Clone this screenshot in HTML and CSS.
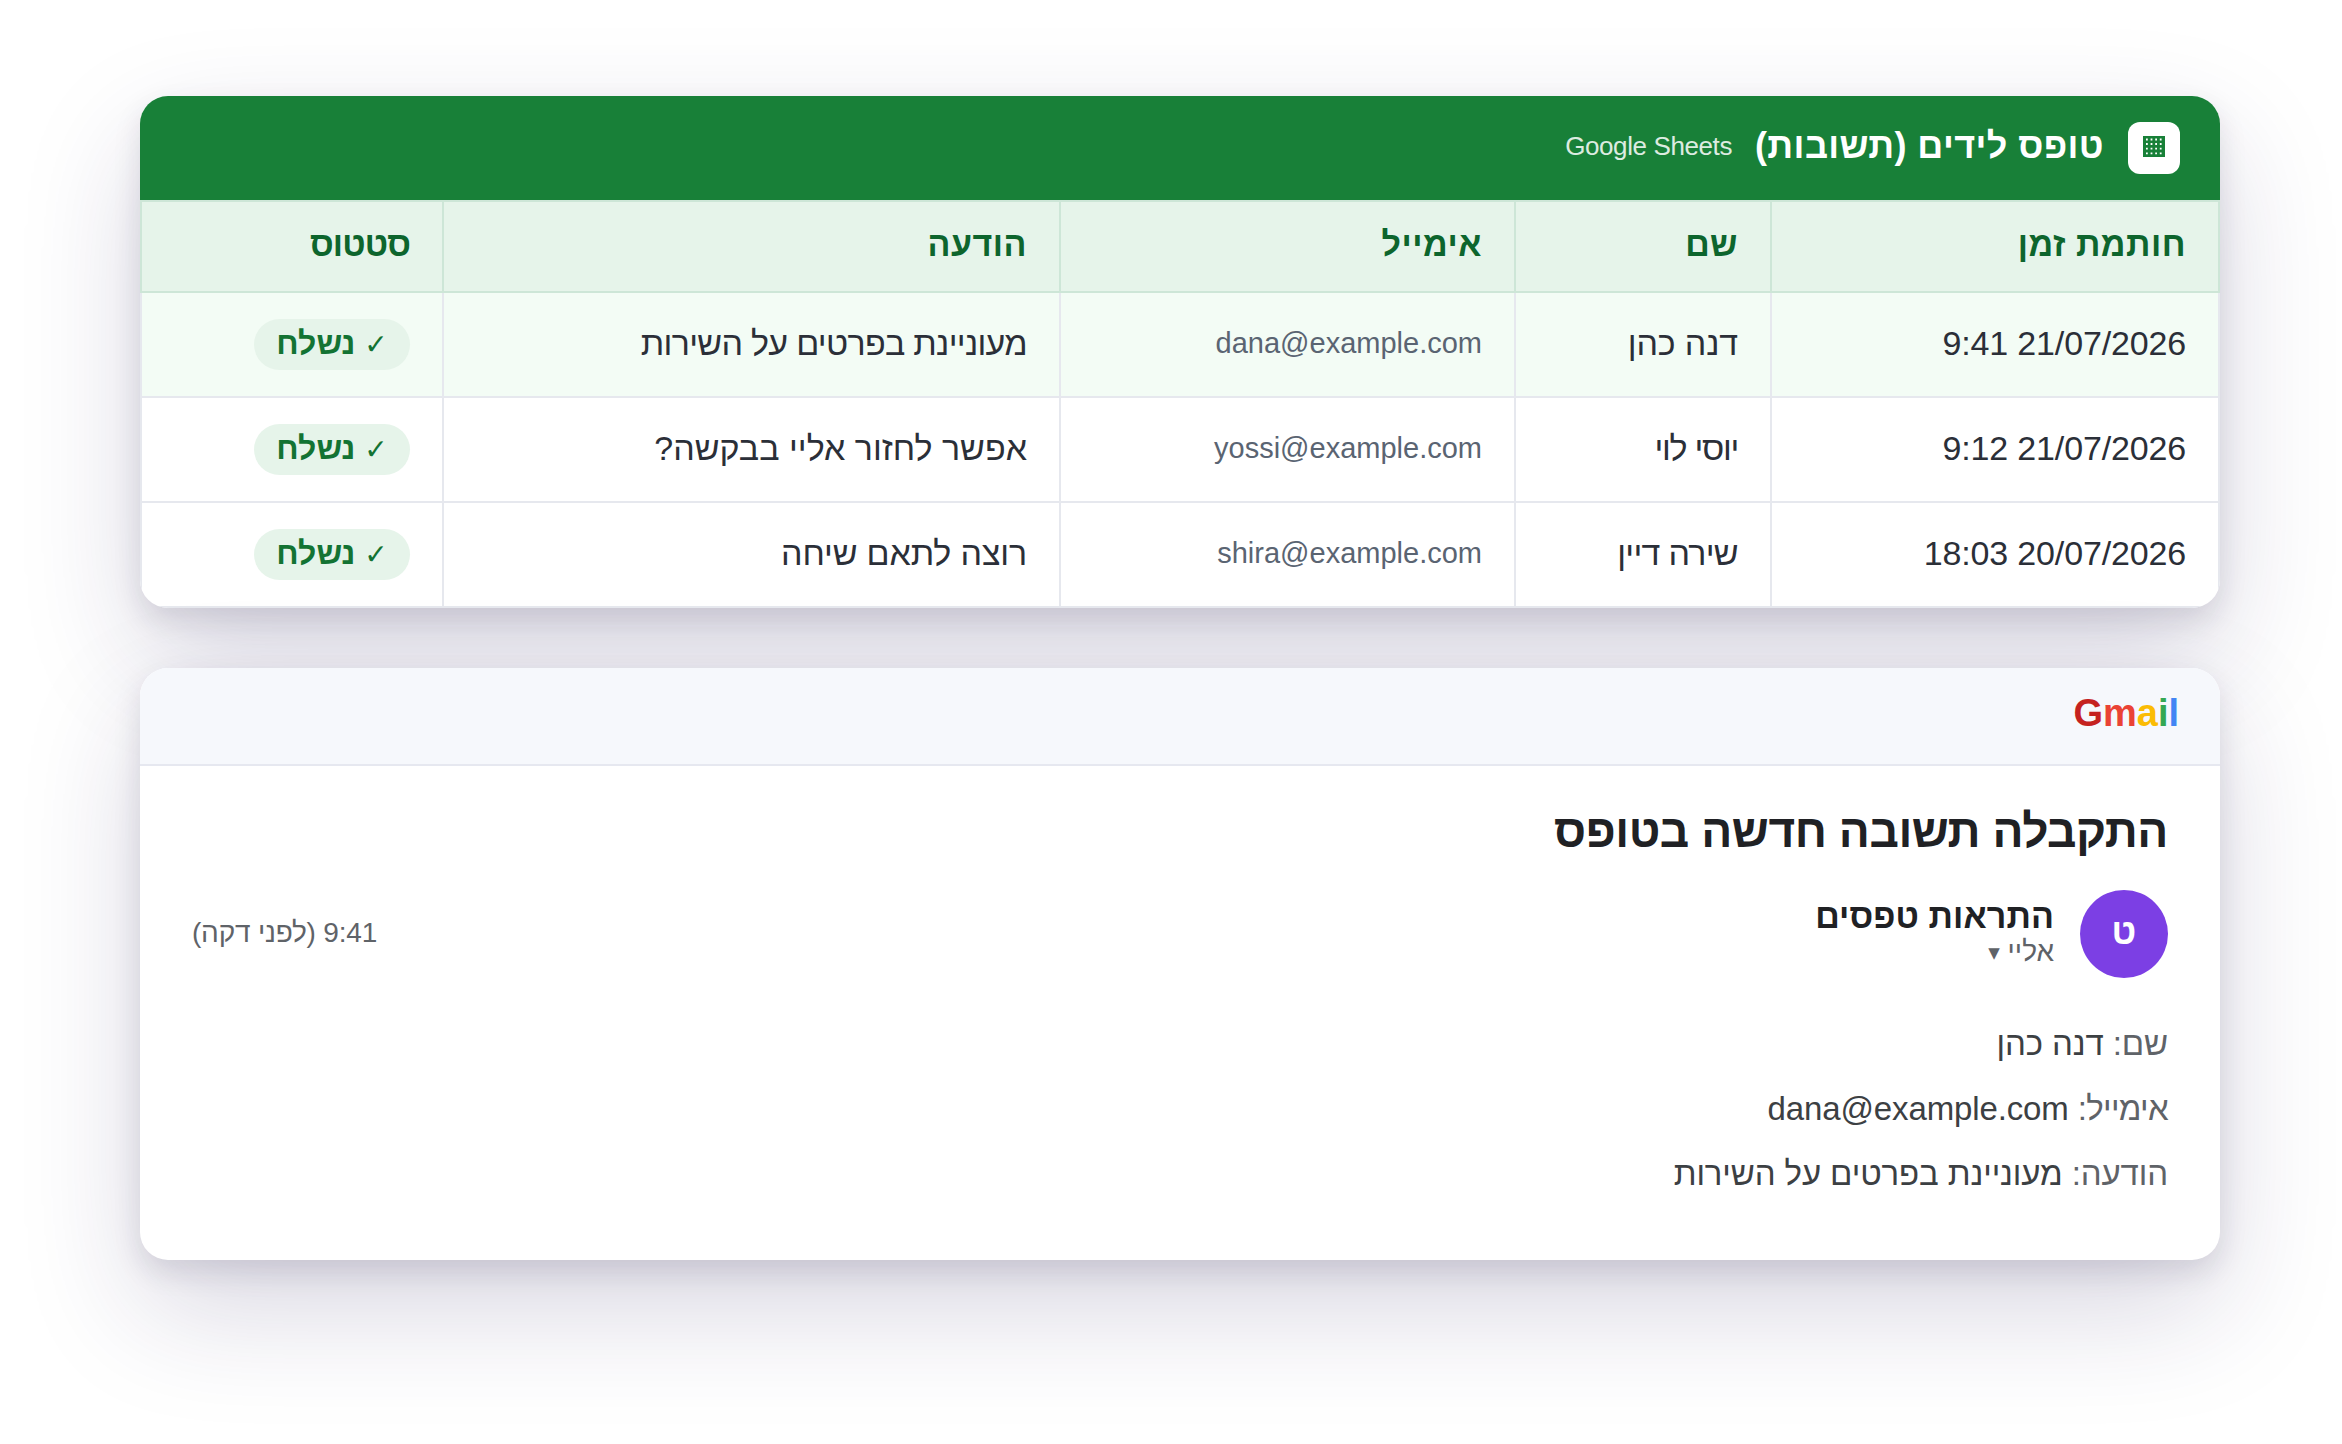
FILE: index.html
```
<!DOCTYPE html>
<html lang="he" dir="rtl">
<head>
    <meta charset="utf-8">
    <title>טופס לידים</title>
    <link rel="stylesheet" href="styles.css">
</head>
<body>
    <div class="card">
        <div class="sheet-head">
            <span class="sheet-icon">
                <svg width="22" height="22" viewBox="0 0 22 22">
                    <rect width="22" height="21" fill="#188038"/>
                    <path d="M3 3.5h16M3 8h16M3 12.7h16M3 17.3h16" stroke="#fff" stroke-width="1.8" stroke-dasharray="1.8 2.8"/>
                </svg>
            </span>
            <span class="sheet-title">טופס לידים (תשובות)</span>
            <span class="sheet-app">Google Sheets</span>
        </div>
        <table>
            <colgroup>
                <col class="c-time">
                <col class="c-name">
                <col class="c-mail">
                <col class="c-msg">
                <col class="c-status">
            </colgroup>
            <tr>
                <th>חותמת זמן</th>
                <th>שם</th>
                <th>אימייל</th>
                <th>הודעה</th>
                <th class="status">סטטוס</th>
            </tr>
            <tr class="fresh">
                <td><bdi dir="ltr">9:41 21/07/2026</bdi></td>
                <td>דנה כהן</td>
                <td class="mail">dana@example.com</td>
                <td class="tight">מעוניינת בפרטים על השירות</td>
                <td><span class="pill"><span class="check">✓</span> נשלח</span></td>
            </tr>
            <tr>
                <td><bdi dir="ltr">9:12 21/07/2026</bdi></td>
                <td class="tighter">יוסי לוי</td>
                <td class="mail">yossi@example.com</td>
                <td class="loose">אפשר לחזור אליי בבקשה?</td>
                <td><span class="pill"><span class="check">✓</span> נשלח</span></td>
            </tr>
            <tr>
                <td><bdi dir="ltr">18:03 20/07/2026</bdi></td>
                <td class="tight">שירה דיין</td>
                <td class="mail">shira@example.com</td>
                <td>רוצה לתאם שיחה</td>
                <td><span class="pill"><span class="check">✓</span> נשלח</span></td>
            </tr>
        </table>
    </div>

    <div class="card">
        <div class="mail-head">
            <span class="gmail" dir="ltr"><span class="g">G</span><span class="m">m</span><span class="a">a</span><span class="i">i</span><span class="l">l</span></span>
        </div>
        <div class="mail-body">
            <h1>התקבלה תשובה חדשה בטופס</h1>
            <div class="sender">
                <div class="avatar">ט</div>
                <div class="who">
                    <div class="from">התראות טפסים</div>
                    <div class="to">אליי <span class="arrow">▼</span></div>
                </div>
                <div class="when">9:41 (לפני דקה)</div>
            </div>
            <div class="fields">
                <div><span class="label">שם:</span> דנה כהן</div>
                <div><span class="label tight">אימייל:</span> dana@example.com</div>
                <div><span class="label">הודעה:</span> מעוניינת בפרטים על השירות</div>
            </div>
        </div>
    </div>
</body>
</html>
```

FILE: styles.css
```
* {
    box-sizing: border-box;
}

body {
    display: flex;
    flex-direction: column;
    gap: 60px;
    min-height: 1444px;
    margin: 0;
    padding: 96px 122px 0 140px;
    background: #fff;
    font-family: "Liberation Sans", Arial, sans-serif;
    color: #202124;
}

.card {
    border-radius: 28px;
    background: #fff;
    overflow: hidden;
    box-shadow: 0 48px 120px rgba(40, 25, 90, 0.18), 0 12px 28px rgba(30, 25, 60, 0.12);
}

.sheet-head {
    display: flex;
    align-items: center;
    height: 104px;
    padding: 0 40px;
    background: #188038;
    color: #fff;
}

.sheet-icon {
    display: flex;
    align-items: center;
    justify-content: center;
    width: 52px;
    height: 52px;
    border-radius: 12px;
    background: #fff;
}

.sheet-icon svg {
    margin-top: -2px;
}

.sheet-title {
    margin-right: 24px;
    padding-bottom: 4px;
    font-size: 36px;
    font-weight: bold;
    letter-spacing: 0.4px;
}

.sheet-app {
    margin-right: 23px;
    padding-bottom: 3px;
    font-size: 26px;
    letter-spacing: -0.4px;
    opacity: 0.85;
}

table {
    width: 100%;
    border-collapse: collapse;
    table-layout: fixed;
}

.c-time { width: 448px; }
.c-name { width: 256px; }
.c-mail { width: 455px; }
.c-msg { width: 617px; }
.c-status { width: 302px; }

th {
    height: 91px;
    padding: 0 32px 5px;
    border: 2px solid #cde6d7;
    background: #e6f4ea;
    color: #0d652d;
    font-size: 34px;
    letter-spacing: 0.5px;
    text-align: right;
}

th.status {
    letter-spacing: -0.9px;
}

td {
    height: 105px;
    padding: 0 32px 3px;
    border: 2px solid #e6e8ee;
    color: #2b2f38;
    font-size: 34px;
    letter-spacing: -0.15px;
    text-align: right;
    white-space: nowrap;
}

.fresh td {
    background: #f3fcf5;
}

td.mail {
    color: #5a6472;
    font-size: 29px;
    letter-spacing: 0;
}

.tight {
    letter-spacing: -0.7px;
}

.tighter {
    letter-spacing: -1.3px;
}

.loose {
    letter-spacing: 0;
}

.pill {
    display: inline-block;
    width: 156px;
    height: 51px;
    line-height: 49px;
    margin-top: 3px;
    border-radius: 26px;
    background: #e6f4ea;
    color: #137333;
    font-size: 32px;
    font-weight: bold;
    letter-spacing: 0;
    text-align: center;
    vertical-align: middle;
}

.check {
    font-family: "DejaVu Sans", sans-serif;
    font-size: 28px;
    font-weight: normal;
}

.mail-head {
    display: flex;
    align-items: center;
    height: 98px;
    padding: 0 41px 5px;
    background: #f6f8fc;
    border-bottom: 2px solid #e6e8f0;
}

.gmail {
    font-size: 38px;
    font-weight: bold;
}

.g { color: #c5221f; }
.m { color: #ea4335; }
.a { color: #fbbc04; }
.i { color: #34a853; }
.l { color: #4285f4; }

.mail-body {
    height: 494px;
    padding: 35px 52px 0;
}

h1 {
    margin: 0;
    height: 60px;
    line-height: 60px;
    font-size: 46px;
    letter-spacing: -0.45px;
}

.sender {
    display: flex;
    align-items: center;
    height: 88px;
    margin-top: 29px;
}

.avatar {
    width: 88px;
    height: 88px;
    line-height: 84px;
    border-radius: 50%;
    background: #7c3fe4;
    color: #fff;
    font-size: 36px;
    font-weight: bold;
    text-align: center;
}

.who {
    margin-right: 26px;
    padding-bottom: 2px;
}

.from {
    line-height: 38px;
    font-size: 34px;
    font-weight: bold;
    letter-spacing: 0.1px;
}

.to {
    line-height: 34px;
    font-size: 28px;
    color: #5f6368;
}

.arrow {
    font-family: "DejaVu Sans", sans-serif;
    font-size: 15px;
    vertical-align: 3px;
}

.when {
    margin-right: auto;
    padding-bottom: 2px;
    font-size: 28px;
    letter-spacing: -0.2px;
    color: #5f6368;
}

.fields {
    margin-top: 33px;
    line-height: 65px;
    font-size: 33px;
    letter-spacing: -0.12px;
    color: #3c4043;
}

.label {
    color: #5f6368;
}
```
